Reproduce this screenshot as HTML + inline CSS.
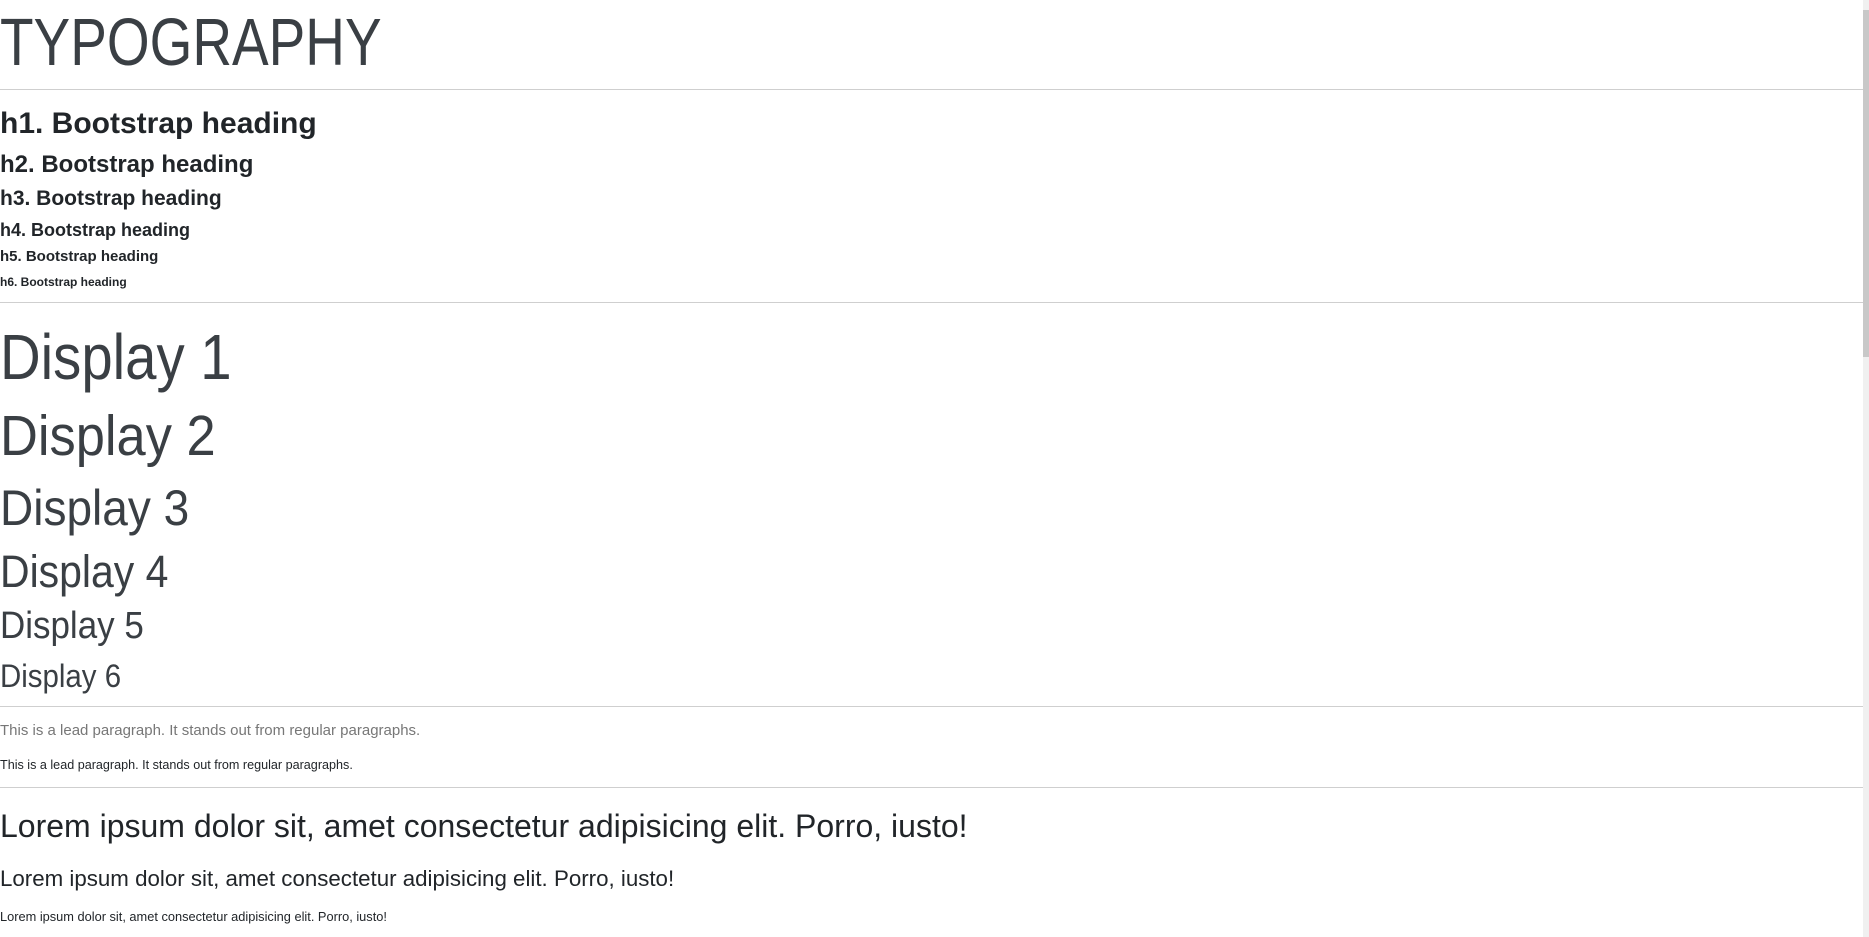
<!DOCTYPE html>
<html><head><meta charset="utf-8"><style>
html,body{margin:0;padding:0;width:1869px;height:937px;overflow:hidden;background:#fff;font-family:"Liberation Sans",sans-serif;color:#212529}
.t{position:absolute;left:0;line-height:1;white-space:nowrap;transform-origin:0 0}
.b{font-weight:bold}
.l{color:#3a3f44}
.hr{position:absolute;left:0;width:1863px;height:1px;background:#cfcfcf}
.sb{position:absolute;right:0;top:0;width:6px;height:937px;background:#f0f0f0}
.th{position:absolute;right:0;top:10px;width:6px;height:347px;background:#c8c8c8}
</style></head><body>
<div class="t l" style="top:9px;font-size:67px;transform:scaleX(.82)">TYPOGRAPHY</div>
<div class="hr" style="top:89px"></div>
<div class="t b" style="top:109px;font-size:30px">h1. Bootstrap heading</div>
<div class="t b" style="top:153px;font-size:24px">h2. Bootstrap heading</div>
<div class="t b" style="top:188px;font-size:21px">h3. Bootstrap heading</div>
<div class="t b" style="top:221px;font-size:18px">h4. Bootstrap heading</div>
<div class="t b" style="top:249px;font-size:15px">h5. Bootstrap heading</div>
<div class="t b" style="top:276px;font-size:12px">h6. Bootstrap heading</div>
<div class="hr" style="top:302px"></div>
<div class="t l" style="top:325px;font-size:64px;transform:scaleX(.88)">Display 1</div>
<div class="t l" style="top:408px;font-size:57px;transform:scaleX(.92)">Display 2</div>
<div class="t l" style="top:483px;font-size:50px;transform:scaleX(.92)">Display 3</div>
<div class="t l" style="top:549px;font-size:45px;transform:scaleX(.91)">Display 4</div>
<div class="t l" style="top:607px;font-size:38px;transform:scaleX(.92)">Display 5</div>
<div class="t l" style="top:660px;font-size:32px;transform:scaleX(.92)">Display 6</div>
<div class="hr" style="top:706px"></div>
<div class="t" style="top:723px;font-size:15px;color:#777">This is a lead paragraph. It stands out from regular paragraphs.</div>
<div class="t" style="top:759px;font-size:12.6px">This is a lead paragraph. It stands out from regular paragraphs.</div>
<div class="hr" style="top:787px"></div>
<div class="t" style="top:810px;font-size:32px">Lorem ipsum dolor sit, amet consectetur adipisicing elit. Porro, iusto!</div>
<div class="t" style="top:868px;font-size:22.3px">Lorem ipsum dolor sit, amet consectetur adipisicing elit. Porro, iusto!</div>
<div class="t" style="top:911px;font-size:12.8px">Lorem ipsum dolor sit, amet consectetur adipisicing elit. Porro, iusto!</div>
<div class="sb"></div><div class="th"></div>
</body></html>
